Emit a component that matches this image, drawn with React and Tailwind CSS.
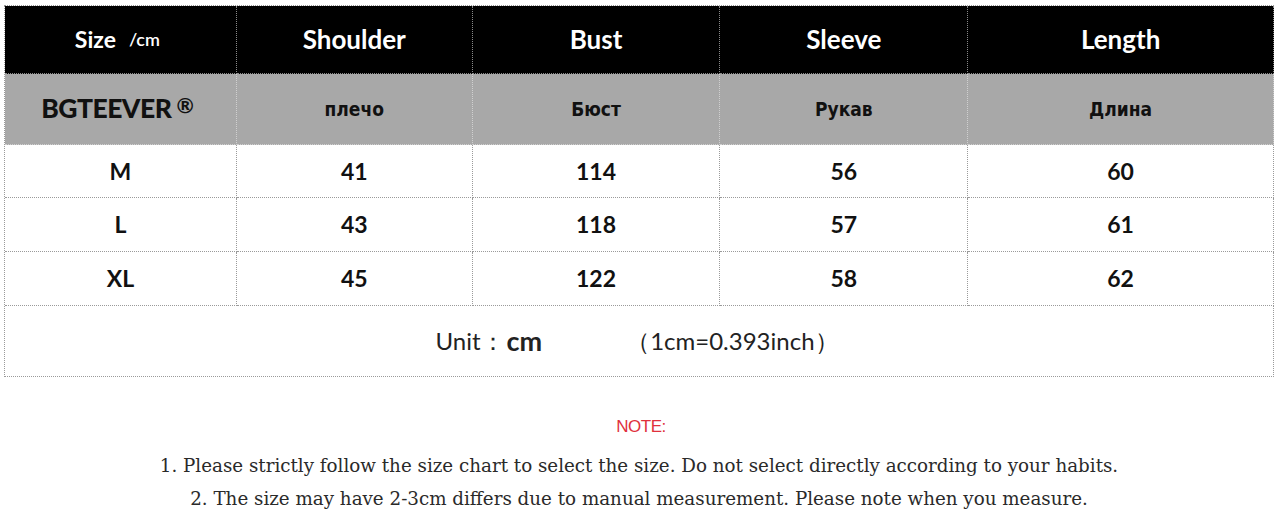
import React from 'react';

const cols = ['w-[232px]', 'w-[236px]', 'w-[248px]', 'w-[248px]', 'w-[306px]'];

const rows = [
  ['M', '41', '114', '56', '60'],
  ['L', '43', '118', '57', '61'],
  ['XL', '45', '122', '58', '62'],
];

const calibri = { fontFamily: 'Lato, "Open Sans", sans-serif' };

export default function App() {
  return (
    <div className="w-[1280px] h-[514px] bg-white overflow-hidden pt-[5px] pl-[4px]">
      {/* size table */}
      <div className="w-[1270px] border-l border-t border-dotted border-[#9a9a9a]" style={calibri}>
        <div className="flex h-[68px] bg-black text-white">
          <div className={`${cols[0]} flex items-center justify-center border-r border-b border-dotted border-[#8a8a8a] pr-[6px]`}>
            <span className="text-[23px] font-bold">Size</span>
            <span className="text-[18px] font-semibold ml-[13px]">/cm</span>
          </div>
          {['Shoulder', 'Bust', 'Sleeve', 'Length'].map((t, i) => (
            <div key={t} className={`${cols[i + 1]} flex items-center justify-center border-r border-b border-dotted border-[#8a8a8a] text-[26px] font-bold`}>
              {t}
            </div>
          ))}
        </div>
        <div className="flex h-[71px] bg-[#a8a8a8] text-[#111]">
          <div className={`${cols[0]} flex items-center justify-center border-r border-b border-dotted border-[#d0d0d0] pr-[6px]`}>
            <span className="text-[26.5px] font-black tracking-[-0.5px]">BGTEEVER</span>
            <span className="text-[21px] font-bold ml-[5px] -mt-[8px]">®</span>
          </div>
          {['плечо', 'Бюст', 'Рукав', 'Длина'].map((t, i) => (
            <div
              key={t}
              className={`${cols[i + 1]} flex items-center justify-center border-r border-b border-dotted border-[#d0d0d0] text-[19px] font-bold`}
              style={{ fontFamily: '"Liberation Sans Narrow", "DejaVu Sans Condensed", sans-serif' }}
            >
              {t}
            </div>
          ))}
        </div>
        {rows.map((r, ri) => (
          <div key={ri} className={`flex ${ri === 0 ? 'h-[53px]' : 'h-[54px]'} text-[#111]`}>
            {r.map((v, i) => (
              <div key={i} className={`${cols[i]} flex items-center justify-center border-r border-b border-dotted border-[#9a9a9a] text-[23px] font-bold`}>
                {v}
              </div>
            ))}
          </div>
        ))}
        <div className="flex items-center justify-center h-[71px] border-r border-b border-dotted border-[#9a9a9a] text-[#222] pr-[4px]">
          <span className="text-[24px]">Unit：</span>
          <span className="text-[27px] font-bold ml-[2px]">cm</span>
          <span className="text-[24px] ml-[84px]">（1cm=0.393inch）</span>
        </div>
      </div>

      {/* notes */}
      <div className="w-[1270px] mt-[41px] flex flex-col items-center">
        <div className="text-[17px] text-[#e0303c] leading-none tracking-[-0.5px] pl-[4px]" style={{ fontFamily: '"Liberation Sans", Arial, sans-serif' }}>
          NOTE:
        </div>
        <div className="mt-[14px] text-[#2a2a2a] leading-[33px] text-center" style={{ fontFamily: '"DejaVu Serif", "Liberation Serif", serif' }}>
          <p className="text-[18.3px]">1. Please strictly follow the size chart to select the size. Do not select directly according to your habits.</p>
          <p className="text-[18.3px]">2. The size may have 2-3cm differs due to manual measurement. Please note when you measure.</p>
        </div>
      </div>
    </div>
  );
}
